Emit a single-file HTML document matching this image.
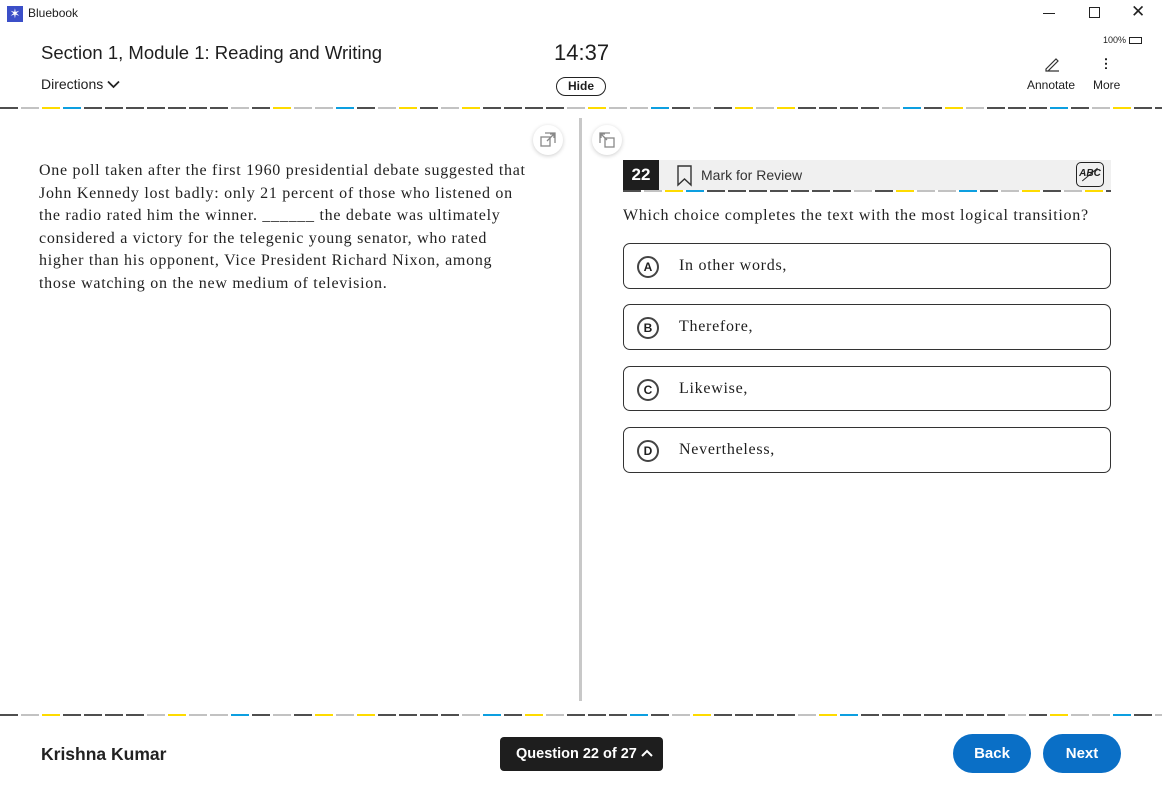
<!DOCTYPE html><html><head><meta charset="utf-8"><style>
*{box-sizing:border-box;margin:0;padding:0}
body{width:1162px;height:787px;position:relative;background:#fff;font-family:"Liberation Sans",Arial,sans-serif;color:#1e1e1e;overflow:hidden}
.a{position:absolute}
.dash{position:absolute;display:flex;gap:3px;height:2px;overflow:hidden}
.dash span{flex:0 0 18px;height:2px}
.serif{font-family:"Liberation Serif","DejaVu Serif",serif;letter-spacing:0.72px}
.choice{position:absolute;left:623px;width:488px;height:46px;border:1px solid #333;border-radius:7px}
.choice .l{position:absolute;left:13px;top:12px;width:22px;height:22px;border:2px solid #444;border-radius:50%;font-size:12px;font-weight:bold;text-align:center;line-height:18px;letter-spacing:0}
.choice .t{position:absolute;left:55px;top:13px;font-size:16px}
.circ{position:absolute;width:30px;height:30px;border-radius:50%;background:#fff;box-shadow:0 1px 4px rgba(0,0,0,.2)}
.btn{position:absolute;top:734px;width:78px;height:39px;border-radius:20px;background:#0a6fc6;color:#fff;font-weight:bold;font-size:15px;text-align:center;line-height:39px}
</style></head><body>
<div class="a" style="left:7px;top:6px;width:16px;height:16px;background:#3b4fc8;color:#fff;font-size:13px;line-height:16px;text-align:center">✶</div>
<div class="a" style="left:28px;top:6px;font-size:12px">Bluebook</div>
<div class="a" style="left:1043px;top:13px;width:12px;height:1px;background:#222"></div>
<div class="a" style="left:1089px;top:7px;width:11px;height:11px;border:1px solid #222"></div>
<div class="a" style="left:1131px;top:2px;font-size:17px;color:#222">✕</div>
<div class="a" style="left:41px;top:42px;font-size:18.5px">Section 1, Module 1: Reading and Writing</div>
<div class="a" style="left:41px;top:76px;font-size:14px">Directions <svg width="13" height="9" viewBox="0 0 13 9"><path d="M1 1.5l5.5 5.5 5.5-5.5" fill="none" stroke="#222" stroke-width="1.8"/></svg></div>
<div class="a" style="left:554px;top:40px;font-size:22px">14:37</div>
<div class="a" style="left:556px;top:77px;width:50px;height:19px;border:1px solid #222;border-radius:10px;font-size:12px;font-weight:bold;text-align:center;line-height:17px">Hide</div>
<div class="a" style="left:1103px;top:35px;font-size:9px">100% <span style="display:inline-block;width:13px;height:7px;border:1px solid #222;vertical-align:-1px"></span></div>
<svg class="a" style="left:1044px;top:56px" width="16" height="16"><path d="M2 13L12 3l2 2L4 15H2z M2 15h13" fill="none" stroke="#333" stroke-width="1.2"/></svg>
<div class="a" style="left:1105px;top:57px;width:2px;height:12px;background:radial-gradient(circle,#222 1px,transparent 1.2px) 0 0/2px 4.5px"></div>
<div class="a" style="left:1027px;top:78px;font-size:12px">Annotate</div>
<div class="a" style="left:1093px;top:78px;font-size:12px">More</div>
<div class="dash" id="d1" style="left:0;top:107px;width:1162px"></div>
<div class="dash" id="d2" style="left:0;top:714px;width:1162px"></div>
<div class="a" style="left:579px;top:118px;width:3px;height:583px;background:#c8c8c8"></div>
<div class="circ" style="left:533px;top:125px"><svg width="30" height="30"><rect x="8" y="12" width="9" height="9" fill="none" stroke="#888" stroke-width="1.3"/><path d="M12 8h10v10 M14 16l7-7 M17 9h4v4" fill="none" stroke="#888" stroke-width="1.3"/></svg></div>
<div class="circ" style="left:592px;top:125px"><svg width="30" height="30"><rect x="13" y="13" width="9" height="9" fill="none" stroke="#888" stroke-width="1.3"/><path d="M18 8H8v10 M9 9l6 6 M9 13V9h4" fill="none" stroke="#888" stroke-width="1.3"/></svg></div>
<div class="a serif" style="left:39px;top:160px;width:530px;font-size:16px;line-height:22.5px;color:#222;white-space:nowrap">One poll taken after the first 1960 presidential debate suggested that<br>John Kennedy lost badly: only 21 percent of those who listened on<br>the radio rated him the winner. ______ the debate was ultimately<br>considered a victory for the telegenic young senator, who rated<br>higher than his opponent, Vice President Richard Nixon, among<br>those watching on the new medium of television.</div>
<div class="a" style="left:623px;top:160px;width:488px;height:30px;background:#f0f0f0"></div>
<div class="a" style="left:623px;top:160px;width:36px;height:30px;background:#1e1e1e;color:#fff;font-weight:bold;font-size:17px;text-align:center;line-height:30px">22</div>
<svg class="a" style="left:676px;top:165px" width="18" height="22"><path d="M2 1h13v19l-6.5-6L2 20z" fill="none" stroke="#333" stroke-width="1.4"/></svg>
<div class="a" style="left:701px;top:167px;font-size:14px;color:#333">Mark for Review</div>
<div class="a" style="left:1076px;top:162px;width:28px;height:25px;border:1.5px solid #222;border-radius:5px;font-size:10px;font-weight:bold;text-align:center;line-height:22px;font-style:italic">ABC<div class="a" style="left:3px;top:11px;width:20px;height:1.3px;background:#222;transform:rotate(-40deg)"></div></div>
<div class="dash" id="d3" style="left:623px;top:190px;width:488px"></div>
<div class="a serif" style="left:623px;top:207px;font-size:16px;color:#222;white-space:nowrap">Which choice completes the text with the most logical transition?</div>
<div class="choice serif" style="top:243px"><div class="l" style="font-family:'Liberation Sans'">A</div><div class="t">In other words,</div></div>
<div class="choice serif" style="top:304px"><div class="l" style="font-family:'Liberation Sans'">B</div><div class="t">Therefore,</div></div>
<div class="choice serif" style="top:366px;height:45px"><div class="l" style="font-family:'Liberation Sans'">C</div><div class="t">Likewise,</div></div>
<div class="choice serif" style="top:427px"><div class="l" style="font-family:'Liberation Sans'">D</div><div class="t">Nevertheless,</div></div>
<div class="a" style="left:41px;top:744px;font-size:17.5px;font-weight:bold;color:#222">Krishna Kumar</div>
<div class="a" style="left:500px;top:737px;width:163px;height:34px;background:#1e1e1e;border-radius:4px;color:#fff;font-weight:bold;font-size:14.5px;line-height:34px;padding-left:16px">Question 22 of 27 <svg width="12" height="9" viewBox="0 0 12 9"><path d="M1 7l5-5 5 5" fill="none" stroke="#fff" stroke-width="2"/></svg></div>
<div class="btn" style="left:953px">Back</div>
<div class="btn" style="left:1043px">Next</div>
<script>
var C={d:"#4f4f4f",l:"#c2c2c2",y:"#fedb00",b:"#0d9fe0"};
var s="dlybdddddddldyllbdlydlyddddlyllbdldylyddddlbdyldddbdlyddd";
function f(id,n,off){var e=document.getElementById(id),h="";for(var i=0;i<n;i++){h+='<span style="background:'+C[s[(i+off)%s.length]]+'"></span>';}e.innerHTML=h;}
f("d1",56,0);f("d2",56,20);f("d3",24,0);
</script>
</body></html>
